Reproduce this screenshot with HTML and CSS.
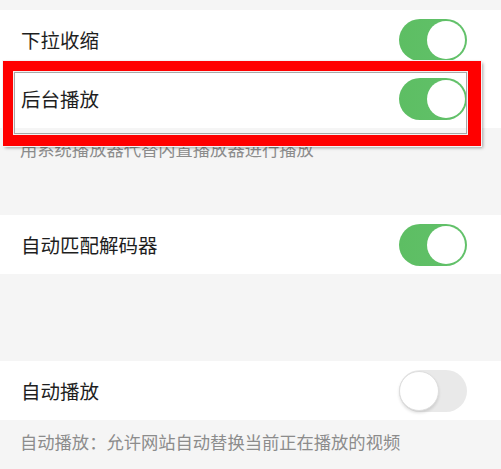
FILE: index.html
```html
<!DOCTYPE html>
<html lang="zh-CN">
<head>
<meta charset="utf-8">
<title>设置</title>
<link rel="stylesheet" href="styles.css">
</head>
<body>
<div class="page">
  <div class="section first">
    <div class="row">
      <span class="label">下拉收缩</span>
      <span class="toggle on"><span class="knob"></span></span>
    </div>
    <div class="row">
      <span class="label">后台播放</span>
      <span class="toggle on"><span class="knob"></span></span>
    </div>
  </div>
  <div class="desc hidden-desc">用系统播放器代替内置播放器进行播放</div>

  <div class="section second">
    <div class="row">
      <span class="label">自动匹配解码器</span>
      <span class="toggle on"><span class="knob"></span></span>
    </div>
  </div>

  <div class="section third">
    <div class="row">
      <span class="label">自动播放</span>
      <span class="toggle off"><span class="knob"></span></span>
    </div>
  </div>
  <div class="desc">自动播放：允许网站自动替换当前正在播放的视频</div>

  <div class="highlight"></div>
</div>
</body>
</html>
```
FILE: styles.css
```css
html, body {
  margin: 0;
  padding: 0;
  background: #f5f5f5;
}
body {
  font-family: "Noto Sans CJK SC", "Noto Sans", sans-serif;
  color: #1e1e1e;
}
.page {
  position: relative;
  width: 501px;
  height: 469px;
  overflow: hidden;
}
.section {
  background: #fff;
}
.section.first {
  margin-top: 10px;
}
.section.second {
  margin-top: 44px;
}
.section.third {
  margin-top: 87px;
}
.row {
  height: 59px;
  display: flex;
  align-items: center;
  justify-content: space-between;
  padding: 0 34px 0 21px;
}
.label {
  font-size: 19.5px;
  line-height: 24px;
}
.desc {
  padding: 11px 21px 12px 20px;
  font-size: 17.3px;
  line-height: 21px;
  color: #8c8c8c;
}
.desc.hidden-desc {
  padding-top: 10px;
}
.toggle {
  position: relative;
  width: 68px;
  height: 42px;
  border-radius: 21px;
  box-sizing: border-box;
  flex: none;
}
.toggle.on {
  background: linear-gradient(90deg, #5dbe63, #62c16a);
}
.toggle.off {
  background: #e9e9e9;
}
.knob {
  position: absolute;
  top: 2px;
  width: 38px;
  height: 38px;
  border-radius: 50%;
  background: #fff;
}
.toggle.on .knob {
  right: 2px;
}
.toggle.off .knob {
  left: 0;
  top: 1px;
  width: 40px;
  height: 40px;
  border: 1px solid #dedede;
  box-sizing: border-box;
  box-shadow: 0 2px 3px rgba(0, 0, 0, 0.12);
}
.highlight {
  position: absolute;
  left: 3px;
  top: 61px;
  width: 478px;
  height: 85px;
  box-sizing: border-box;
  border-style: solid;
  border-color: #ff0000;
  border-width: 10px 13px 11px 10px;
  box-shadow:
    inset 0 0 0 1px #f2f2f2,
    inset 0 0 0 2px #a8a8a8,
    0 0 0 1px #f4f4f4,
    2px 2px 3px rgba(0, 0, 0, 0.35);
}
```
